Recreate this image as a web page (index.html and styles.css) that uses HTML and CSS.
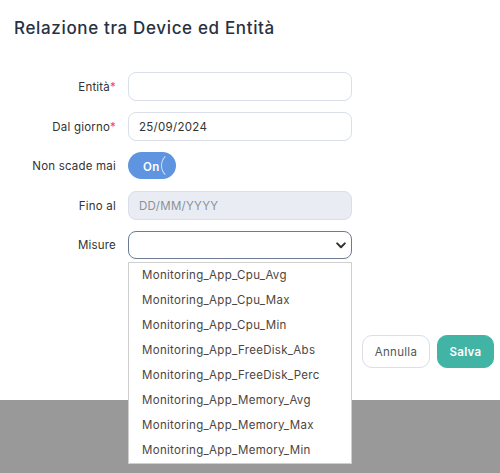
FILE: index.html
```html
<!DOCTYPE html>
<html lang="it">
<head>
<meta charset="utf-8">
<link rel="stylesheet" href="styles.css">
</head>
<body>
<div class="modal">
  <h1 class="title">Relazione tra Device ed Entità</h1>
  <div class="form">
    <div class="row">
      <label class="label">Entità<span class="req">*</span></label>
      <div class="input"></div>
    </div>
    <div class="row">
      <label class="label">Dal giorno<span class="req">*</span></label>
      <div class="input">25/09/2024</div>
    </div>
    <div class="row row-toggle">
      <label class="label">Non scade mai</label>
      <div class="toggle"><span class="toggle-text">On</span><span class="knob"></span></div>
    </div>
    <div class="row">
      <label class="label">Fino al</label>
      <div class="input disabled">DD/MM/YYYY</div>
    </div>
    <div class="row">
      <label class="label">Misure</label>
      <div class="input select">
        <svg class="chev" width="10" height="7" viewBox="0 0 10 7"><path d="M1.2 1.4 L5 5.2 L8.8 1.4" fill="none" stroke="#333" stroke-width="2" stroke-linecap="round" stroke-linejoin="round"/></svg>
      </div>
    </div>
  </div>
  <div class="actions">
    <button class="btn btn-cancel">Annulla</button>
    <button class="btn btn-save">Salva</button>
  </div>
  <ul class="dropdown">
    <li>Monitoring_App_Cpu_Avg</li>
    <li>Monitoring_App_Cpu_Max</li>
    <li>Monitoring_App_Cpu_Min</li>
    <li>Monitoring_App_FreeDisk_Abs</li>
    <li>Monitoring_App_FreeDisk_Perc</li>
    <li>Monitoring_App_Memory_Avg</li>
    <li>Monitoring_App_Memory_Max</li>
    <li>Monitoring_App_Memory_Min</li>
  </ul>
</div>
<div class="backdrop"></div>
</body>
</html>
```
FILE: styles.css
```css
* { box-sizing: border-box; }
html, body { margin: 0; padding: 0; }
body {
  width: 500px;
  height: 473px;
  overflow: hidden;
  font-family: "Inter", "Noto Sans", sans-serif;
  letter-spacing: 0.3px;
  background: #fff;
}
.modal {
  position: relative;
  height: 400px;
  background: #fff;
  padding: 17px 0 0 0;
}
.title {
  margin: 0 0 0 14px;
  font-size: 17px;
  font-weight: 500;
  color: #283142;
  line-height: 22px;
  letter-spacing: 0.65px;
}
.form {
  margin-top: 33px;
  display: flex;
  flex-direction: column;
  gap: 11px;
}
.row {
  display: flex;
  align-items: center;
  gap: 12px;
}
.label {
  width: 116px;
  text-align: right;
  font-size: 11.5px;
  letter-spacing: 0.2px;
  color: #333;
}
.req { color: #e8467c; }
.input {
  width: 224px;
  height: 29px;
  border: 1px solid #d9dee8;
  border-radius: 8px;
  background: #fff;
  padding: 0 10px;
  display: flex;
  align-items: center;
  font-size: 11.5px;
  color: #333;
}
.input.disabled {
  background: #e9edf3;
  color: #8a909a;
}
.input.select {
  border-color: #6c7a93;
  justify-content: flex-end;
  padding-right: 5px;
  height: 28px;
}
.row-toggle { margin: 0 0 1px 0; }
.toggle {
  position: relative;
  width: 48px;
  height: 27px;
  border-radius: 14px;
  background: #5f95e0;
  display: flex;
  align-items: center;
  overflow: hidden;
}
.toggle-text {
  color: #fff;
  font-size: 11.5px;
  font-weight: 600;
  margin: 3px 0 0 15px;
}
.knob {
  position: absolute;
  right: 0;
  top: 0;
  width: 27px;
  height: 27px;
  border-radius: 50%;
  border: 1px solid #cfe0f7;
  border-right-color: transparent;
  border-top-color: transparent;
  border-bottom-color: transparent;
  transform: translateX(12px);
}
.actions {
  margin-top: 76px;
  display: flex;
  justify-content: flex-end;
  gap: 7px;
  padding-right: 6px;
}
.btn {
  height: 33px;
  border-radius: 10px;
  font-family: inherit;
  letter-spacing: 0.3px;
  font-size: 11.5px;
  padding: 0;
}
.btn-cancel {
  width: 68px;
  background: #fff;
  border: 1px solid #d9dee8;
  color: #555;
}
.btn-save {
  width: 57px;
  background: #41b4a6;
  border: 1px solid #41b4a6;
  color: #fff;
  font-weight: 600;
}
.dropdown {
  position: absolute;
  left: 128px;
  top: 262px;
  width: 224px;
  height: 202px;
  margin: 0;
  padding: 0;
  list-style: none;
  background: #fff;
  border: 1px solid #cfcfcf;
  z-index: 5;
}
.dropdown li {
  height: 25px;
  line-height: 25px;
  padding-left: 13px;
  font-size: 11.5px;
  color: #4d4540;
}
.backdrop {
  height: 73px;
  background: #999;
}
```
